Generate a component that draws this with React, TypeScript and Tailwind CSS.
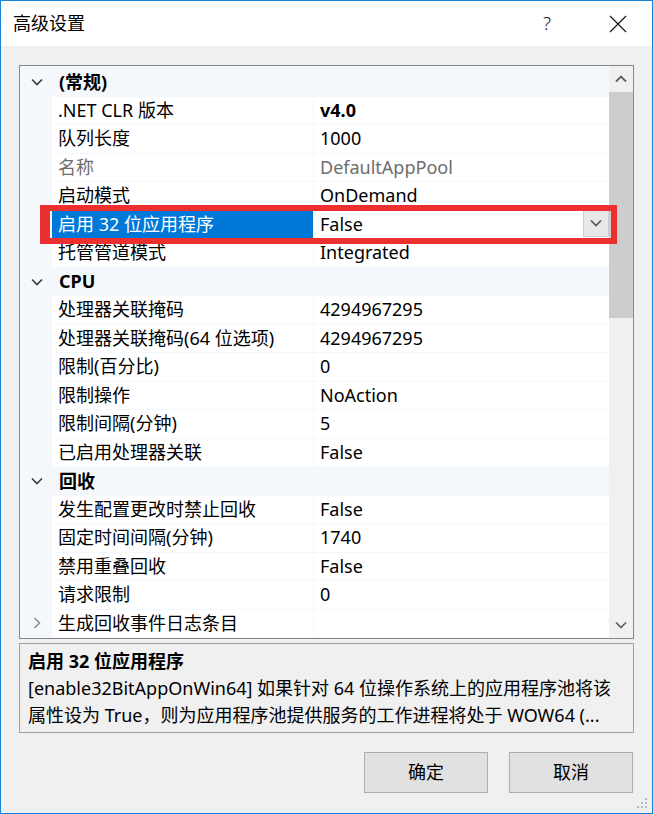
import React from "react";

type Row =
  | { kind: "cat"; label: string }
  | {
      kind: "prop";
      name: string;
      value: string;
      gray?: boolean;
      bold?: boolean;
      selected?: boolean;
      collapsed?: boolean;
    };

const rows: Row[] = [
  { kind: "cat", label: "(常规)" },
  { kind: "prop", name: ".NET CLR 版本", value: "v4.0", bold: true },
  { kind: "prop", name: "队列长度", value: "1000" },
  { kind: "prop", name: "名称", value: "DefaultAppPool", gray: true },
  { kind: "prop", name: "启动模式", value: "OnDemand" },
  { kind: "prop", name: "启用 32 位应用程序", value: "False", selected: true },
  { kind: "prop", name: "托管管道模式", value: "Integrated" },
  { kind: "cat", label: "CPU" },
  { kind: "prop", name: "处理器关联掩码", value: "4294967295" },
  { kind: "prop", name: "处理器关联掩码(64 位选项)", value: "4294967295" },
  { kind: "prop", name: "限制(百分比)", value: "0" },
  { kind: "prop", name: "限制操作", value: "NoAction" },
  { kind: "prop", name: "限制间隔(分钟)", value: "5" },
  { kind: "prop", name: "已启用处理器关联", value: "False" },
  { kind: "cat", label: "回收" },
  { kind: "prop", name: "发生配置更改时禁止回收", value: "False" },
  { kind: "prop", name: "固定时间间隔(分钟)", value: "1740" },
  { kind: "prop", name: "禁用重叠回收", value: "False" },
  { kind: "prop", name: "请求限制", value: "0" },
  { kind: "prop", name: "生成回收事件日志条目", value: "", collapsed: true },
];

function ChevronDown({ className = "" }: { className?: string }) {
  return (
    <svg width="12" height="8" viewBox="0 0 12 8" className={className}>
      <path d="M1 1.5l5 5 5-5" fill="none" stroke="currentColor" strokeWidth="1.7" />
    </svg>
  );
}

function ChevronUp({ className = "" }: { className?: string }) {
  return (
    <svg width="12" height="8" viewBox="0 0 12 8" className={className}>
      <path d="M1 6.5l5-5 5 5" fill="none" stroke="currentColor" strokeWidth="1.9" />
    </svg>
  );
}

function ChevronRight({ className = "" }: { className?: string }) {
  return (
    <svg width="8" height="12" viewBox="0 0 8 12" className={className}>
      <path d="M1.5 1l5 5-5 5" fill="none" stroke="currentColor" strokeWidth="1.5" />
    </svg>
  );
}

function GridRow({ row }: { row: Row }) {
  if (row.kind === "cat") {
    return (
      <div className="flex h-[28.5px] items-center bg-[#f4f7fc]">
        <div className="flex w-[32px] justify-center pl-[2px] text-[#404040]">
          <ChevronDown />
        </div>
        <span className="pl-[7px] font-bold">{row.label}</span>
      </div>
    );
  }
  return (
    <div className="flex h-[28.5px] border-b border-[#f4f7fc]">
      <div className="flex w-[32px] items-center justify-center bg-[#f4f7fc] pl-[2px] text-[#8a8a8a]">
        {row.collapsed && <ChevronRight />}
      </div>
      <div
        className={
          row.selected
            ? "flex w-[261px] items-center bg-[#0078d7] pl-[6px] text-white"
            : row.gray
              ? "flex w-[261px] items-center bg-white pl-[6px] text-[#6d6d6d]"
              : "flex w-[261px] items-center bg-white pl-[6px]"
        }
      >
        <span className="whitespace-nowrap">{row.name}</span>
      </div>
      <div className="relative flex flex-1 items-center border-l border-[#f4f7fc] bg-white pl-[6px]">
        <span
          className={
            row.bold ? "font-bold" : row.gray ? "text-[#6d6d6d]" : ""
          }
        >
          {row.value}
        </span>
        {row.selected && (
          <div className="absolute right-0 top-[-1px] flex h-[27px] w-[26px] items-center justify-center border border-[#cfcfcf] bg-[#e8e8e8] text-[#555]">
            <ChevronDown />
          </div>
        )}
      </div>
    </div>
  );
}

function ResizeGrip() {
  const dots = [
    [8, 0],
    [4, 4],
    [8, 4],
    [0, 8],
    [4, 8],
    [8, 8],
  ];
  return (
    <svg width="11" height="11" viewBox="0 0 11 11" className="absolute bottom-[4px] right-[4px]">
      {dots.map(([x, y], i) => (
        <rect key={i} x={x} y={y} width="2" height="2" fill="#b8b8b8" />
      ))}
    </svg>
  );
}

export default function App() {
  return (
    <div className="relative flex h-[814px] w-[653px] flex-col border border-[#1883d7] bg-[#f0f0f0] font-['Noto_Sans','Noto_Sans_CJK_SC',sans-serif] text-[18px] text-black">
      {/* title bar */}
      <div className="flex h-[45px] items-center bg-white pl-[12px]">
        <span className="flex-1">高级设置</span>
        <span className="mr-[58px] text-[19px] font-light text-[#222]">?</span>
        <svg width="18" height="18" viewBox="0 0 18 18" className="mr-[25px]">
          <path d="M1 1l16 16M17 1L1 17" stroke="#111" strokeWidth="1.1" />
        </svg>
      </div>

      {/* property grid */}
      <div className="ml-[18px] mt-[19px] flex h-[574px] w-[615px] border border-[#828790] bg-white">
        <div className="flex flex-1 flex-col bg-[#f4f7fc] pt-[2px]">
          {rows.map((r, i) => (
            <GridRow key={i} row={r} />
          ))}
        </div>
        <div className="flex w-[24px] flex-col bg-[#f0f0f0]">
          <div className="flex h-[26px] items-center justify-center text-[#606060]">
            <ChevronUp />
          </div>
          <div className="h-[226px] bg-[#cdcdcd]" />
          <div className="flex-1" />
          <div className="flex h-[26px] items-center justify-center text-[#606060]">
            <ChevronDown />
          </div>
        </div>
      </div>

      {/* description */}
      <div className="ml-[18px] mt-[4px] h-[90px] w-[615px] border border-[#a0a0a0] bg-[#f0f0f0] pl-[8px] pt-[4px] leading-[27px]">
        <div className="font-bold">启用 32 位应用程序</div>
        <div className="whitespace-nowrap">
          [enable32BitAppOnWin64] 如果针对 64 位操作系统上的应用程序池将该
        </div>
        <div className="whitespace-nowrap">
          属性设为 True，则为应用程序池提供服务的工作进程将处于 WOW64 (...
        </div>
      </div>

      {/* buttons */}
      <div className="mr-[19px] mt-[19px] flex justify-end gap-[21px]">
        <button className="h-[41px] w-[124px] border border-[#adadad] bg-[#e1e1e1]">确定</button>
        <button className="h-[41px] w-[124px] border border-[#adadad] bg-[#e1e1e1]">取消</button>
      </div>

      {/* red annotation box */}
      <div className="pointer-events-none absolute left-[39px] top-[204px] h-[39px] w-[577px] border-y-[6px] border-l-[10px] border-r-[6px] border-[#ec2f2f]" />

      <ResizeGrip />
    </div>
  );
}
